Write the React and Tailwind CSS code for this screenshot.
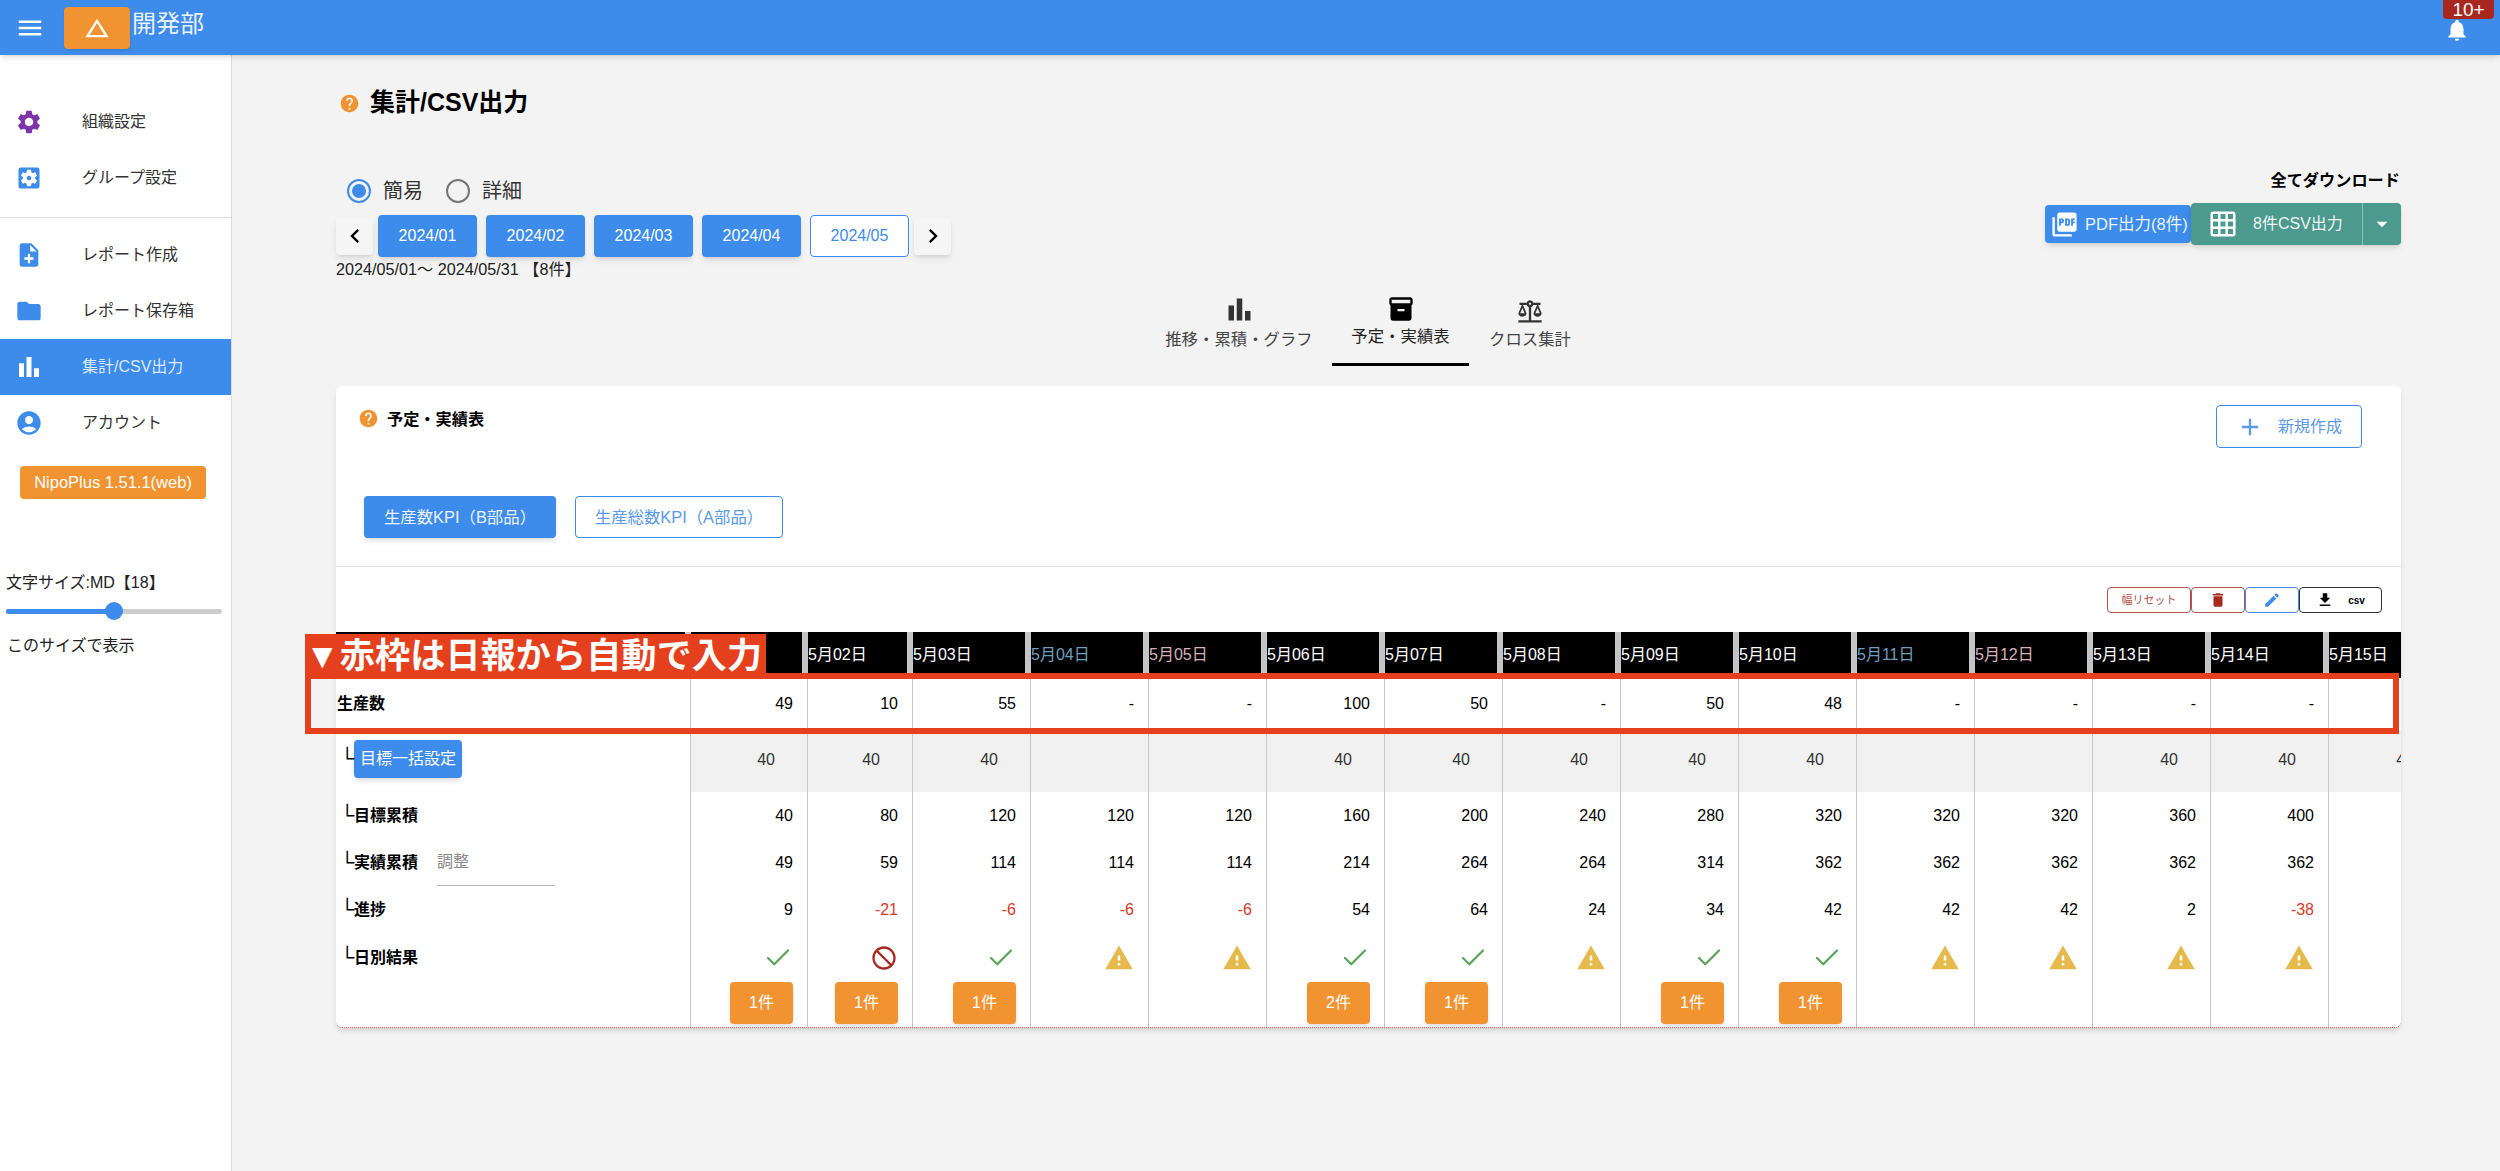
import React from "react";
import { Check } from "lucide-react";
import {
  MdMenu,
  MdChangeHistory,
  MdNotifications,
  MdSettings,
  MdSettingsApplications,
  MdNoteAdd,
  MdFolder,
  MdBarChart,
  MdAccountCircle,
  MdHelp,
  MdChevronLeft,
  MdChevronRight,
  MdPictureAsPdf,
  MdGridOn,
  MdArrowDropDown,
  MdInventory2,
  MdBalance,
  MdAdd,
  MdDelete,
  MdEdit,
  MdFileDownload,
  MdDoNotDisturb,
  MdWarning,
} from "react-icons/md";

const days = ["01", "02", "03", "04", "05", "06", "07", "08", "09", "10", "11", "12", "13", "14", "15"];
const actual = ["49", "10", "55", "-", "-", "100", "50", "-", "50", "48", "-", "-", "-", "-", ""];
const target = ["40", "40", "40", "", "", "40", "40", "40", "40", "40", "", "", "40", "40", "40"];
const targetSum = ["40", "80", "120", "120", "120", "160", "200", "240", "280", "320", "320", "320", "360", "400", ""];
const actualSum = ["49", "59", "114", "114", "114", "214", "264", "264", "314", "362", "362", "362", "362", "362", ""];
const progress = ["9", "-21", "-6", "-6", "-6", "54", "64", "24", "34", "42", "42", "42", "2", "-38", ""];
const results = ["ok", "ng", "ok", "warn", "warn", "ok", "ok", "warn", "ok", "ok", "warn", "warn", "warn", "warn", ""];
const reports = ["1件", "1件", "1件", "", "", "2件", "1件", "", "1件", "1件", "", "", "", "", ""];

const gridCols = "grid grid-cols-[355px_117px_105px_repeat(13,118px)]";

const SideItem = ({ icon, label, active }) => (
  <div className={`flex h-[56px] items-center ${active ? "bg-[#3d8bea] text-[#dce9fb]" : "text-[#333]"}`}>
    <div className="flex w-[58px] justify-center">{icon}</div>
    <span className="ml-[24px] text-[16px]">{label}</span>
  </div>
);

const Sidebar = () => (
  <aside className="w-[232px] shrink-0 border-r border-[#ddd] bg-white pt-[39px]">
    <SideItem icon={<MdSettings size={28} className="text-[#7b35a8]" />} label="組織設定" />
    <SideItem icon={<MdSettingsApplications size={28} className="text-[#3d8bea]" />} label="グループ設定" />
    <div className="mt-[11px] mb-[9px] border-t border-[#ddd]" />
    <SideItem icon={<MdNoteAdd size={28} className="text-[#3d8bea]" />} label="レポート作成" />
    <SideItem icon={<MdFolder size={28} className="text-[#3d8bea]" />} label="レポート保存箱" />
    <SideItem icon={<MdBarChart size={30} className="text-white" />} label="集計/CSV出力" active />
    <SideItem icon={<MdAccountCircle size={28} className="text-[#3d8bea]" />} label="アカウント" />
    <div className="mt-[15px] ml-[20px] flex h-[33px] w-[186px] items-center justify-center rounded bg-[#f09330] text-[16.5px] text-white">
      NipoPlus 1.51.1(web)
    </div>
    <div className="mt-[72px] pl-[6px] text-[16px] leading-[24px] text-[#222]">文字サイズ:MD【18】</div>
    <div className="relative mt-[14px] ml-[6px] h-[5px] w-[216px] rounded-full bg-[#ccc]">
      <div className="h-[5px] w-[108px] rounded-full bg-[#3d8bea]" />
      <div className="absolute top-[-7px] left-[99px] h-[18px] w-[18px] rounded-full bg-[#3d8bea]" />
    </div>
    <div className="mt-[20px] pl-[7px] text-[16px] leading-[24px] text-[#222]">このサイズで表示</div>
  </aside>
);

const Radio = ({ label, checked }) => (
  <div className="flex items-center">
    <span className={`flex h-[24px] w-[24px] items-center justify-center rounded-full border-2 ${checked ? "border-[#3d8bea]" : "border-[#757575]"}`}>
      {checked && <span className="h-[14px] w-[14px] rounded-full bg-[#3d8bea]" />}
    </span>
    <span className="ml-[12px] text-[20px] text-[#333]">{label}</span>
  </div>
);

const MonthBtn = ({ label, outline }) => (
  <div
    className={`flex h-[42px] w-[99px] items-center justify-center rounded text-[16px] ${
      outline ? "border border-[#3d8bea] bg-white text-[#3d8bea]" : "bg-[#3d8bea] text-white shadow-md"
    }`}
  >
    {label}
  </div>
);

const ArrowBtn = ({ children }) => (
  <div className="flex h-[37px] w-[37px] items-center justify-center rounded bg-[#f5f5f5] text-black shadow-md">{children}</div>
);

const TopControls = () => (
  <div className="mt-[56px] flex items-start justify-between">
    <div>
      <div className="ml-[11px] flex h-[32px] items-center gap-[23px]">
        <Radio label="簡易" checked />
        <Radio label="詳細" />
      </div>
      <div className="mt-[8px] flex h-[42px] items-center gap-[9px]">
        <div className="-mr-[4px]">
          <ArrowBtn>
            <MdChevronLeft size={28} />
          </ArrowBtn>
        </div>
        <MonthBtn label="2024/01" />
        <MonthBtn label="2024/02" />
        <MonthBtn label="2024/03" />
        <MonthBtn label="2024/04" />
        <MonthBtn label="2024/05" outline />
        <div className="-ml-[4px]">
          <ArrowBtn>
            <MdChevronRight size={28} />
          </ArrowBtn>
        </div>
      </div>
      <div className="text-[16.2px] leading-[24px] text-[#222]">2024/05/01〜 2024/05/31 【8件】</div>
    </div>
    <div className="-mt-[7px] flex flex-col items-end">
      <div className="pr-[1px] text-[16.2px] leading-[24px] font-bold text-black">全てダウンロード</div>
      <div className="mt-[11px] flex items-center">
        <div className="flex h-[38px] w-[146px] items-center rounded bg-[#3d8bea] pl-[5px] text-[16.5px] text-[#eaf3fe] shadow-md">
          <MdPictureAsPdf size={29} className="text-white" />
          <span className="ml-[6px] whitespace-nowrap">PDF出力(8件)</span>
        </div>
        <div className="flex h-[42px] w-[210px] items-center rounded bg-[#4c9a8e] text-[16px] text-[#eef7f5] shadow-md">
          <MdGridOn size={30} className="ml-[17px] shrink-0 text-white" />
          <span className="ml-[15px] w-[109px] whitespace-nowrap">8件CSV出力</span>
          <div className="flex h-full flex-1 items-center justify-center border-l border-[#8fc2b9]">
            <MdArrowDropDown size={26} className="text-white" />
          </div>
        </div>
      </div>
    </div>
  </div>
);

const Tab = ({ icon, label, active, width }) => (
  <div className={`flex h-[76px] flex-col items-center justify-end pb-[15px] ${width} ${active ? "border-b-[3px] border-black text-[#222]" : "text-[#444]"}`}>
    {icon}
    <span className="mt-[1px] text-[16.4px] leading-[24px] whitespace-nowrap">{label}</span>
  </div>
);

const Tabs = () => (
  <div className="mt-[9px] flex justify-center">
    <Tab width="w-[186px]" icon={<MdBarChart size={33} className="text-[#333]" />} label="推移・累積・グラフ" />
    <Tab width="w-[137px]" icon={<MdInventory2 size={28} className="text-black" />} label="予定・実績表" active />
    <Tab width="w-[122px]" icon={<MdBalance size={28} className="text-[#333]" />} label="クロス集計" />
  </div>
);

const ToolBtn = ({ className, children }) => (
  <div className={`flex h-[26px] items-center justify-center rounded border ${className}`}>{children}</div>
);

const HeadCell = ({ children, color = "text-white" }) => (
  <div className={`flex items-center border-r-[6px] border-[#c4c4c4] bg-black text-[16px] ${color}`}>{children}</div>
);

const Label = ({ children, className = "" }) => (
  <div className={`flex border-r border-[#c8c8c8] pl-[9px] text-[16px] text-black ${className}`}>{children}</div>
);

const Corner = () => (
  <span className="inline-block w-[9px] -translate-x-[5px] -translate-y-[1px] text-[20px] leading-none font-normal">└</span>
);

const Cell = ({ children, className = "" }) => (
  <div className={`flex items-center justify-end border-r border-[#c8c8c8] pr-[14px] text-[16px] ${className}`}>{children}</div>
);

const ValueRow = ({ label, values, height, extra, colored }) => (
  <div className={`${gridCols} ${height}`}>
    <Label className="items-center">
      <Corner />
      <span className="font-bold">{label}</span>
      {extra}
    </Label>
    {values.map((v, i) => (
      <Cell key={i} className={colored && v.startsWith("-") ? "text-[#d93a2b]" : "text-black"}>
        {v}
      </Cell>
    ))}
  </div>
);

const ResultIcon = ({ kind }) => {
  if (kind === "ok") return <Check size={30} strokeWidth={1.8} className="text-[#5aa55a]" />;
  if (kind === "ng") return <MdDoNotDisturb size={28} className="text-[#a82820]" />;
  if (kind === "warn") return <MdWarning size={30} className="text-[#e5b94b]" />;
  return null;
};

const KpiTable = () => (
  <div className="overflow-hidden rounded-b-md border-b border-dotted border-[#c44]">
    <div className={`${gridCols} h-[46px]`}>
      <div className="border-r-[6px] border-[#c4c4c4] bg-black" />
      {days.map((d) => (
        <HeadCell key={d} color={d === "04" || d === "11" ? "text-[#6f9fbf]" : d === "05" || d === "12" ? "text-[#d8b0b8]" : "text-white"}>
          {d === "01" ? "" : `5月${d}日`}
        </HeadCell>
      ))}
    </div>
    <div className={`${gridCols} h-[52px]`}>
      <Label className="items-center !pl-[1px] font-bold">生産数</Label>
      {actual.map((v, i) => (
        <Cell key={i} className="text-black">
          {v}
        </Cell>
      ))}
    </div>
    <div className={`${gridCols} h-[62px]`}>
      <Label className="items-start">
        <div className="mt-[10px] flex items-center">
          <Corner />
          <div className="flex h-[38px] w-[108px] items-center justify-center rounded bg-[#3d8bea] text-[16px] text-white shadow-md">目標一括設定</div>
        </div>
      </Label>
      {target.map((v, i) => (
        <Cell key={i} className="bg-[#f1f1f1] !pr-[32px] !pb-[2px] text-[#333]">
          {v}
        </Cell>
      ))}
    </div>
    <ValueRow label="目標累積" values={targetSum} height="h-[47px]" />
    <ValueRow
      label="実績累積"
      values={actualSum}
      height="h-[47px]"
      extra={
        <div className="ml-[19px] flex h-full w-[118px] items-center border-b border-[#bbb] text-[16px] text-[#888]">調整</div>
      }
    />
    <ValueRow label="進捗" values={progress} height="h-[47px]" colored />
    <div className={`${gridCols} h-[49px]`}>
      <Label className="items-center">
        <Corner />
        <span className="font-bold">日別結果</span>
      </Label>
      {results.map((r, i) => (
        <Cell key={i} className="!pr-[14px]">
          <ResultIcon kind={r} />
        </Cell>
      ))}
    </div>
    <div className={`${gridCols} h-[45px]`}>
      <Label />
      {reports.map((r, i) => (
        <Cell key={i} className="items-start">
          {r && <div className="flex h-[42px] w-[63px] items-center justify-center rounded bg-[#f09330] text-[16px] text-white shadow-md">{r}</div>}
        </Cell>
      ))}
    </div>
  </div>
);

const Card = () => (
  <section className="relative mt-[20px] rounded-md bg-white shadow-md">
    <div className="flex h-[181px] justify-between border-b border-[#e4e4e4]">
      <div>
        <div className="mt-[22px] ml-[22px] flex items-center">
          <MdHelp size={21} className="text-[#f09330]" />
          <span className="ml-[8px] text-[16.2px] leading-[20px] font-bold text-black">予定・実績表</span>
        </div>
        <div className="mt-[67px] ml-[28px] flex gap-[19px]">
          <div className="flex h-[42px] w-[192px] items-center justify-center rounded bg-[#3d8bea] text-[16.4px] text-[#eaf3fe] shadow-md">生産数KPI（B部品）</div>
          <div className="flex h-[42px] w-[208px] items-center justify-center rounded border border-[#3d8bea] text-[16.4px] text-[#5a9ae8]">生産総数KPI（A部品）</div>
        </div>
      </div>
      <div className="mt-[19px] mr-[39px] flex h-[43px] w-[146px] items-center justify-center rounded border border-[#3d8bea] text-[16px] text-[#5a9ae8]">
        <MdAdd size={28} />
        <span className="ml-[14px]">新規作成</span>
      </div>
    </div>
    <div className="flex h-[65px] justify-end pt-[20px] pr-[19px]">
      <ToolBtn className="w-[84px] border-[#b5524c] text-[11px] text-[#b5524c]">幅リセット</ToolBtn>
      <ToolBtn className="w-[54px] border-[#b5524c] text-[#a82820]">
        <MdDelete size={18} />
      </ToolBtn>
      <ToolBtn className="w-[54px] border-[#3d8bea] text-[#3d8bea]">
        <MdEdit size={18} />
      </ToolBtn>
      <ToolBtn className="w-[83px] border-[#333] text-black">
        <MdFileDownload size={18} />
        <span className="ml-[14px] text-[10px] font-bold">csv</span>
      </ToolBtn>
    </div>
    <KpiTable />
    <div className="absolute top-[287px] left-[-31px] h-[61px] w-[2094px] border-[6px] border-[#e5401e]" />
    <div className="absolute top-[248px] left-[-31px] flex h-[44px] w-[461px] items-center overflow-hidden bg-[#e5401e] text-[35px] font-bold tracking-[0.2px] whitespace-nowrap text-white">
      ▼赤枠は日報から自動で入力
    </div>
  </section>
);

const App = () => (
  <div className="flex h-[1171px] w-[2500px] flex-col overflow-hidden bg-[#f3f3f3] font-['Liberation_Sans','Noto_Sans_CJK_JP',sans-serif]">
    <header className="relative z-10 flex h-[55px] shrink-0 items-center bg-[#3d8bea] shadow-md">
      <MdMenu size={30} className="ml-[15px] text-white" />
      <div className="ml-[19px] flex h-[42px] w-[66px] items-center justify-center rounded bg-[#f09330] shadow-sm">
        <MdChangeHistory size={28} className="text-white" />
      </div>
      <span className="ml-[2px] -translate-y-[4px] text-[24px] text-[#eaf3fe]">開発部</span>
      <div className="relative mt-[4px] mr-[30px] ml-auto">
        <MdNotifications size={26} className="text-white" />
        <div className="absolute top-[-17px] left-[-1px] flex h-[19px] w-[51px] items-center justify-center rounded-b bg-[#a82820] text-[19px] leading-[19px] text-white">10+</div>
      </div>
    </header>
    <div className="flex flex-1">
      <Sidebar />
      <main className="min-w-0 flex-1 pr-[99px] pl-[104px]">
        <div className="mt-[32px] flex h-[32px] items-center pl-[3px]">
          <MdHelp size={21} className="text-[#f09330]" />
          <h1 className="ml-[10px] text-[25px] font-bold text-black">集計/CSV出力</h1>
        </div>
        <TopControls />
        <Tabs />
        <Card />
      </main>
    </div>
  </div>
);

export default App;
